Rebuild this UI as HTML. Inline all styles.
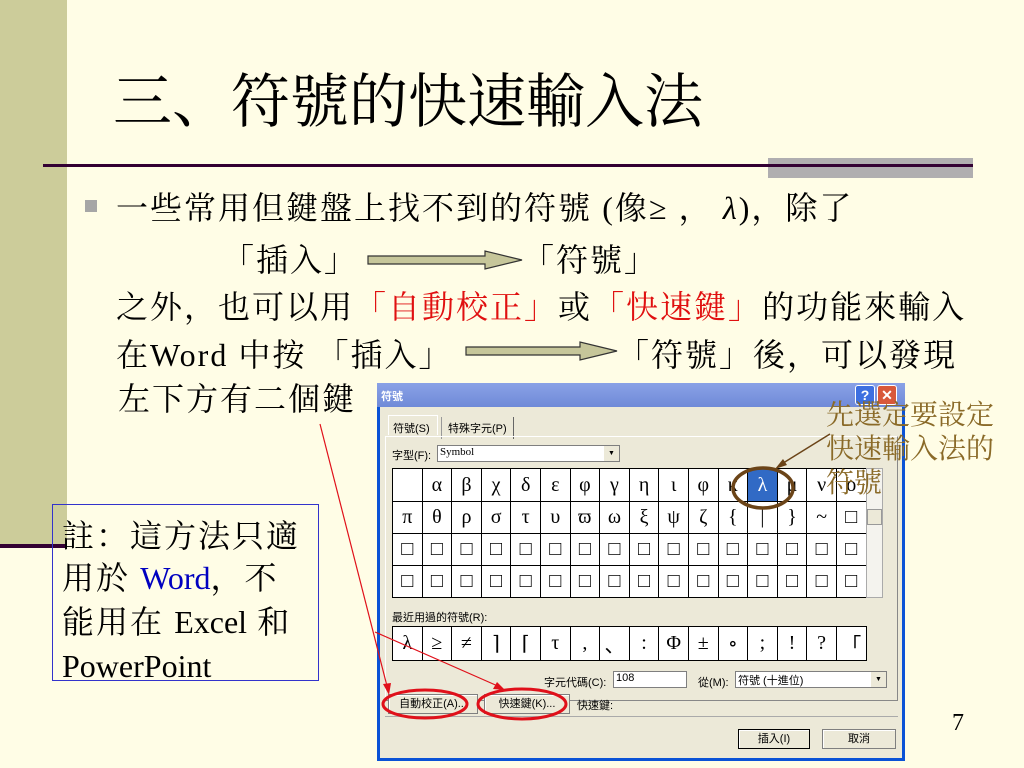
<!DOCTYPE html>
<html><head><meta charset="utf-8"><style>
*{margin:0;padding:0;box-sizing:border-box}
body{width:1024px;height:768px;overflow:hidden;background:#fffde6;position:relative;font-family:"Noto Serif CJK SC","Liberation Serif",serif;color:#000}
.l{font-family:"Liberation Serif",serif}
.a{position:absolute;white-space:nowrap}
.t{font-size:32px;line-height:36px;letter-spacing:2px}
.red{color:#e01010}
.dlg{position:absolute;left:377px;top:383px;width:528px;height:378px;background:#ece9d8;border:3px solid #0a52d6;border-top:none;font-family:"Liberation Sans","Noto Sans CJK TC",sans-serif;font-size:11px}
.grid{position:absolute;display:grid;grid-template-columns:repeat(16,29.6px);background:#fff;border-left:1px solid #000;border-top:1px solid #000}
.grid div{border-right:1px solid #000;border-bottom:1px solid #000;display:flex;align-items:center;justify-content:center;font-family:"Liberation Serif","DejaVu Serif",serif;font-size:20px}
.btn{position:absolute;background:#ece9d8;border:1px solid #7f7f7f;box-shadow:inset 1px 1px #fff;text-align:center;line-height:18px;font-size:11px}
</style></head><body>
<div class="a" style="left:0;top:0;width:67px;height:546px;background:#cccc9a"></div>
<div class="a" style="left:0;top:544px;width:67px;height:4px;background:#330033"></div>
<div class="a" style="left:768px;top:158px;width:205px;height:20px;background:#b0aeb0"></div>
<div class="a" style="left:43px;top:164px;width:930px;height:3px;background:#330033"></div>
<div class="a" style="left:113px;top:62px;font-size:59px;line-height:70px">三、符號的快速輸入法</div>
<div class="a" style="left:85px;top:200px;width:12px;height:12px;background:#a6a6a6"></div>
<div class="a t" style="left:116px;top:188px">一些常用但鍵盤上找不到的符號 <span class="l">(</span>像<span class="l">≥</span> ， <i class="l">λ</i><span class="l">)</span>，除了</div>
<div class="a t" style="left:222px;top:240px">「插入」</div>
<div class="a t" style="left:522px;top:240px">「符號」</div>
<div class="a t" style="left:116px;top:287px">之外，也可以用<span class="red">「自動校正」</span>或<span class="red">「快速鍵」</span>的功能來輸入</div>
<div class="a t" style="left:116px;top:335px">在<span class="l">Word </span>中按 「插入」</div>
<div class="a t" style="left:617px;top:335px">「符號」後，可以發現</div>
<div class="a t" style="left:118px;top:379px">左下方有二個鍵</div>
<svg class="a" style="left:0;top:0" width="1024" height="768">
<polygon points="368,256 485,256 485,251 522,260 485,269 485,264 368,264" fill="#c6c69a" stroke="#333" stroke-width="1.2"/>
<polygon points="466,347 580,347 580,342 617,351 580,360 580,355 466,355" fill="#c6c69a" stroke="#333" stroke-width="1.2"/>
</svg>
<div class="a" style="left:52px;top:504px;width:267px;height:177px;border:1px solid #3333cc"></div>
<div class="a" style="left:62px;top:513px;line-height:42px;font-size:32px;letter-spacing:2px">註：這方法只適<br>用於 <span class="l" style="color:#0000c0;letter-spacing:0">Word</span>，不<br>能用在 <span class="l" style="letter-spacing:0">Excel</span> 和<br><span class="l" style="letter-spacing:0">PowerPoint</span></div>
<div class="a l" style="left:952px;top:710px;font-size:24px">7</div>
<div class="dlg">
<div style="position:absolute;left:-3px;top:0;width:528px;height:24px;background:linear-gradient(#8aa2e6,#6f8ad8)"><span style="position:absolute;left:4px;top:5px;color:#fff;font-weight:bold">符號</span>
<div style="position:absolute;left:478px;top:2px;width:20px;height:20px;background:#3d6fe0;border:1px solid #fff;border-radius:3px;color:#fff;font-weight:bold;text-align:center;line-height:18px;font-size:14px">?</div>
<div style="position:absolute;left:500px;top:2px;width:20px;height:20px;background:#d8583a;border:1px solid #fff;border-radius:3px;color:#fff;font-weight:bold;text-align:center;line-height:18px;font-size:14px">✕</div></div>
<div style="position:absolute;left:8px;top:32px;width:50px;height:20px;border:1px solid #fff;border-bottom:none;padding:4px 4px">符號(S)</div>
<div style="position:absolute;left:61px;top:34px;padding:3px 6px;border-left:1px solid #999;border-right:1px solid #666">特殊字元(P)</div>
<div style="position:absolute;left:5px;top:53px;width:513px;height:265px;border:1px solid #fff;border-right-color:#888;border-bottom-color:#888"></div>
<div style="position:absolute;left:12px;top:64px">字型(F):</div>
<div style="position:absolute;left:57px;top:62px;width:183px;height:17px;background:#fff;border:1px solid #7f7f7f;padding-left:2px;font-family:'Liberation Serif',serif">Symbol<span style="position:absolute;right:0;top:0;width:15px;height:15px;background:#ece9d8;font-size:7px;text-align:center;line-height:15px">▼</span></div>
<div class="grid" style="left:12px;top:85px;grid-template-rows:33px 32px 32px 32px">
<div></div><div>α</div><div>β</div><div>χ</div><div>δ</div><div>ε</div><div>φ</div><div>γ</div><div>η</div><div>ι</div><div>φ</div><div>κ</div><div style="background:#316ac5;color:#fff">λ</div><div>μ</div><div>ν</div><div>ο</div>
<div>π</div><div>θ</div><div>ρ</div><div>σ</div><div>τ</div><div>υ</div><div>ϖ</div><div>ω</div><div>ξ</div><div>ψ</div><div>ζ</div><div>{</div><div>|</div><div>}</div><div>~</div><div>□</div>
<div>□</div><div>□</div><div>□</div><div>□</div><div>□</div><div>□</div><div>□</div><div>□</div><div>□</div><div>□</div><div>□</div><div>□</div><div>□</div><div>□</div><div>□</div><div>□</div>
<div>□</div><div>□</div><div>□</div><div>□</div><div>□</div><div>□</div><div>□</div><div>□</div><div>□</div><div>□</div><div>□</div><div>□</div><div>□</div><div>□</div><div>□</div><div>□</div>
</div>
<div style="position:absolute;left:486px;top:85px;width:17px;height:130px;background:#f4f3ee;border:1px solid #aaa"><div style="position:absolute;top:40px;left:0;width:15px;height:16px;background:#ece9d8;border:1px solid #999"></div></div>
<div style="position:absolute;left:12px;top:226px">最近用過的符號(R):</div>
<div class="grid" style="left:12px;top:243px;grid-template-rows:34px">
<div>λ</div><div>≥</div><div>≠</div><div>⌉</div><div>⌈</div><div>τ</div><div>,</div><div>、</div><div>:</div><div>Φ</div><div>±</div><div>∘</div><div>;</div><div>!</div><div>?</div><div>「</div>
</div>
<div style="position:absolute;left:164px;top:291px">字元代碼(C):</div>
<div style="position:absolute;left:233px;top:288px;width:74px;height:17px;background:#fff;border:1px solid #7f7f7f;padding-left:2px">108</div>
<div style="position:absolute;left:318px;top:291px">從(M):</div>
<div style="position:absolute;left:355px;top:288px;width:152px;height:17px;background:#fff;border:1px solid #7f7f7f;padding-left:2px">符號 (十進位)<span style="position:absolute;right:0;top:0;width:15px;height:15px;background:#ece9d8;font-size:7px;text-align:center;line-height:15px">▼</span></div>
<div class="btn" style="left:8px;top:311px;width:90px;height:20px">自動校正(A)...</div>
<div class="btn" style="left:104px;top:311px;width:86px;height:20px">快速鍵(K)...</div>
<div style="position:absolute;left:197px;top:314px">快速鍵:</div>
<div style="position:absolute;left:5px;top:333px;width:513px;height:1px;background:#aaa"></div>
<div class="btn" style="left:358px;top:346px;width:72px;height:20px;border-color:#000">插入(I)</div>
<div class="btn" style="left:442px;top:346px;width:74px;height:20px">取消</div>
</div>
<svg class="a" style="left:0;top:0" width="1024" height="768">
<ellipse cx="763" cy="488" rx="30" ry="20" fill="none" stroke="#6b4418" stroke-width="3.5"/>
<line x1="830" y1="434" x2="780" y2="465" stroke="#6b4418" stroke-width="1.5"/>
<polygon points="775,469 783,459 787,465" fill="#6b4418"/>
<ellipse cx="425" cy="704" rx="42" ry="14" fill="none" stroke="#e0101a" stroke-width="3"/>
<ellipse cx="522" cy="704" rx="44" ry="15" fill="none" stroke="#e0101a" stroke-width="3"/>
<line x1="320" y1="424" x2="388" y2="690" stroke="#e0101a" stroke-width="1.2"/>
<polygon points="389,695 383,684 391,683" fill="#e0101a"/>
<line x1="375" y1="632" x2="500" y2="687" stroke="#e0101a" stroke-width="1.2"/>
<polygon points="505,690 493,689 497,682" fill="#e0101a"/>
</svg>
<div class="a" style="left:826px;top:396px;font-size:28px;line-height:34px;color:#8a6a28">先選定要設定<br>快速輸入法的<br>符號</div>
</body></html>
